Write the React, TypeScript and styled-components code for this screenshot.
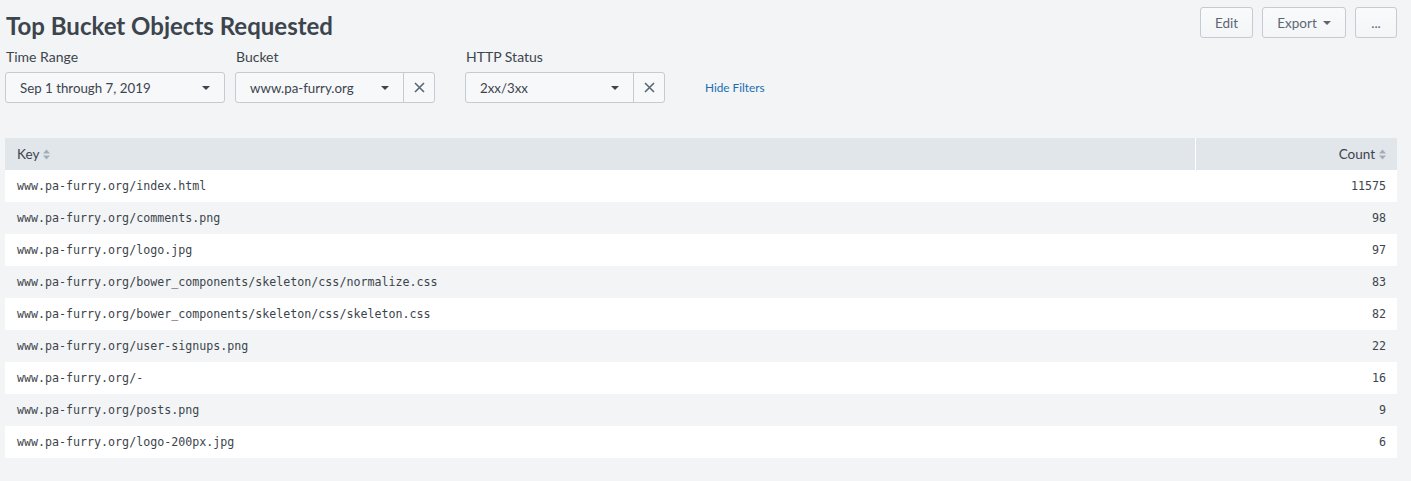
import React from "react";
import styled, { createGlobalStyle } from "styled-components";

const GlobalStyle = createGlobalStyle`
  html, body { margin: 0; padding: 0; background: #f2f4f5; }
  body { font-family: Lato, "Open Sans", Arial, sans-serif; color: #3c444d; }
  * { box-sizing: border-box; }
`;

const Page = styled.div`
  padding: 7px 14px 20px 5px;
`;

const TopBar = styled.div`
  display: flex;
  justify-content: space-between;
  align-items: flex-start;
`;

const Title = styled.h1`
  margin: 5px 0 0 1px;
  font-size: 24px;
  font-weight: 700;
  color: #3c444d;
  line-height: 28px;
`;

const Actions = styled.div`
  display: flex;
  gap: 9px;
`;

const Button = styled.button<{ $w: number }>`
  width: ${(p) => p.$w}px;
  height: 31px;
  border: 1px solid #c3cbd4;
  border-radius: 3px;
  background: linear-gradient(#f9fafb, #f3f5f7);
  color: #5c6773;
  font-family: Lato, "Open Sans", Arial, sans-serif;
  font-size: 13.5px;
  display: flex;
  align-items: center;
  justify-content: center;
  gap: 6px;
  padding: 0;
`;

const Caret = styled.span`
  width: 0;
  height: 0;
  border-left: 4px solid transparent;
  border-right: 4px solid transparent;
  border-top: 4px solid #5c6773;
`;

const Filters = styled.div`
  display: flex;
  align-items: flex-end;
  margin-top: 8px;
`;

const Field = styled.div<{ $w: number; $mr: number }>`
  width: ${(p) => p.$w}px;
  margin-right: ${(p) => p.$mr}px;
  display: flex;
  flex-direction: column;
`;

const Label = styled.label`
  font-size: 14px;
  line-height: 18px;
  color: #3c444d;
  margin-left: 1px;
  margin-bottom: 6px;
`;

const Control = styled.div`
  display: flex;
  height: 31px;
  border: 1px solid #c3cbd4;
  border-radius: 3px;
  background: #f7f8fa;
`;

const Select = styled.div`
  flex: 1;
  display: flex;
  align-items: center;
  justify-content: space-between;
  padding: 0 14px 0 14px;
  font-size: 13.3px;
  color: #3c444d;
`;

const SmallCaret = styled(Caret)`
  border-top: 4px solid #3c444d;
`;

const Clear = styled.div`
  width: 31px;
  border-left: 1px solid #c3cbd4;
  display: flex;
  align-items: center;
  justify-content: center;
  color: #5c6773;
`;

const HideLink = styled.a`
  font-size: 11.8px;
  color: #1a6fb0;
  line-height: 31px;
`;

const Table = styled.table`
  margin-top: 35px;
  width: 100%;
  border-collapse: collapse;
  font-size: 13.5px;
`;

const HeadCell = styled.th<{ $right?: boolean }>`
  height: 32px;
  background: #e1e6eb;
  font-weight: 400;
  color: #3c444d;
  text-align: ${(p) => (p.$right ? "right" : "left")};
  padding: 0 11px 0 12px;
  border-left: ${(p) => (p.$right ? "1px solid #fff" : "none")};
  width: ${(p) => (p.$right ? "202px" : "auto")};
`;

const SortIcon = styled.svg`
  margin-left: 4px;
  vertical-align: -1px;
`;

const Row = styled.tr<{ $odd: boolean }>`
  background: ${(p) => (p.$odd ? "#f2f4f5" : "#ffffff")};
`;

const Cell = styled.td<{ $right?: boolean }>`
  height: 32px;
  padding: 0 11px 0 12px;
  font-family: "DejaVu Sans Mono", "Liberation Mono", monospace;
  font-size: 11.65px;
  color: #3c444d;
  text-align: ${(p) => (p.$right ? "right" : "left")};
`;

const Sort = () => (
  <SortIcon width="7" height="11" viewBox="0 0 7 11">
    <path d="M3.5 0.5 L7 4.5 H0 Z" fill="#a3adb8" />
    <path d="M3.5 10.5 L7 6.5 H0 Z" fill="#a3adb8" />
  </SortIcon>
);

const X = () => (
  <svg width="11" height="11" viewBox="0 0 11 11">
    <path d="M1 1 L10 10 M10 1 L1 10" stroke="#5c6773" strokeWidth="1.6" />
  </svg>
);

const rows: [string, string][] = [
  ["www.pa-furry.org/index.html", "11575"],
  ["www.pa-furry.org/comments.png", "98"],
  ["www.pa-furry.org/logo.jpg", "97"],
  ["www.pa-furry.org/bower_components/skeleton/css/normalize.css", "83"],
  ["www.pa-furry.org/bower_components/skeleton/css/skeleton.css", "82"],
  ["www.pa-furry.org/user-signups.png", "22"],
  ["www.pa-furry.org/-", "16"],
  ["www.pa-furry.org/posts.png", "9"],
  ["www.pa-furry.org/logo-200px.jpg", "6"],
];

export default function App() {
  return (
    <Page>
      <GlobalStyle />
      <TopBar>
        <Title>Top Bucket Objects Requested</Title>
        <Actions>
          <Button $w={53}>Edit</Button>
          <Button $w={84}>
            Export <Caret />
          </Button>
          <Button $w={42}>...</Button>
        </Actions>
      </TopBar>
      <Filters>
        <Field $w={220} $mr={10}>
          <Label>Time Range</Label>
          <Control>
            <Select>
              Sep 1 through 7, 2019 <SmallCaret />
            </Select>
          </Control>
        </Field>
        <Field $w={200} $mr={30}>
          <Label>Bucket</Label>
          <Control>
            <Select>
              www.pa-furry.org <SmallCaret />
            </Select>
            <Clear>
              <X />
            </Clear>
          </Control>
        </Field>
        <Field $w={200} $mr={40}>
          <Label>HTTP Status</Label>
          <Control>
            <Select>
              2xx/3xx <SmallCaret />
            </Select>
            <Clear>
              <X />
            </Clear>
          </Control>
        </Field>
        <HideLink>Hide Filters</HideLink>
      </Filters>
      <Table>
        <thead>
          <tr>
            <HeadCell>
              Key
              <Sort />
            </HeadCell>
            <HeadCell $right>
              Count
              <Sort />
            </HeadCell>
          </tr>
        </thead>
        <tbody>
          {rows.map(([k, c], i) => (
            <Row key={k} $odd={i % 2 === 1}>
              <Cell>{k}</Cell>
              <Cell $right>{c}</Cell>
            </Row>
          ))}
        </tbody>
      </Table>
    </Page>
  );
}
